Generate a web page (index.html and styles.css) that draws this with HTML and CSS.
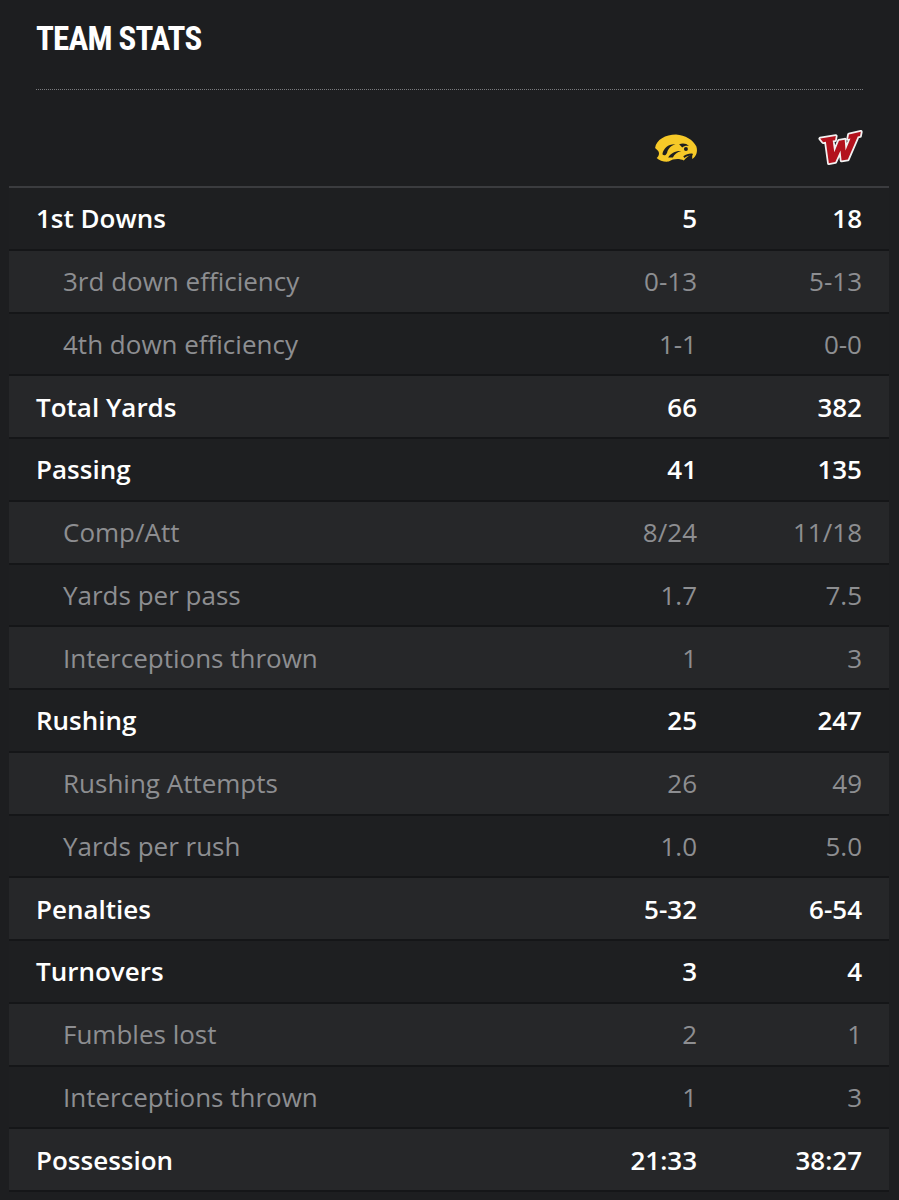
FILE: index.html
```html
<!DOCTYPE html>
<html lang="en">
<head>
<meta charset="utf-8">
<title>Team Stats</title>
<link rel="stylesheet" href="styles.css">
</head>
<body>
<div class="page">
  <header class="title-wrap">
    <h1 class="title">TEAM STATS</h1>
    <div class="dots"></div>
  </header>
  <div class="table">
    <div class="logos">
      <span></span>
      <span class="logo">
        <svg width="46" height="31" viewBox="0 0 44 29" aria-label="Iowa">
          <path fill="#f6c928" d="M2,14 C3,6 12,1 22,1 C31,1.5 38,6 41.5,12.5 C43,17.5 41.5,22 37.5,24.5 L37.5,20 C35,21 32,23 29.5,26 C25.5,24 19.5,24 15,27 C10.5,27.5 6,26 3.5,23.5 C6,22 6.5,18.5 4.5,16.5 Z"/>
          <path fill="#1d1e20" d="M9,20 C10,14 15,10 21.5,10.5 C17.5,11.5 14.5,14.5 13.5,18.5 C12.5,21 10.5,22 9,20 Z"/>
          <path fill="#1d1e20" d="M14.5,23 C17,19 22,16.5 27,17 C23,18 20.5,20.5 19,23 Z"/>
          <path fill="#1d1e20" d="M25,10.5 C28,9 32,9.5 34.5,12 C32,11.5 29.5,12 28,13.5 Z"/>
          <circle cx="31.5" cy="15" r="1.9" fill="#1d1e20"/>
          <path fill="#1d1e20" d="M29,22 C32,20 35,19 38,19.5 L38,21 C35,21 32,22 30,23.5 Z"/>
        </svg>
      </span>
      <span class="logo">
        <svg width="48" height="42" viewBox="0 0 46 40" aria-label="Wisconsin">
          <path fill="#b3121d" stroke="#f2f2f2" stroke-width="3.4" stroke-linejoin="round" paint-order="stroke" d="M4,11 L19,8.5 L18.3,12.5 L16,12.8 L17.5,24 L22,13 L27.5,12 L28.3,22.5 L33,11 L30.8,11.3 L31.6,7 L43,4.5 L42.2,8.6 L40,9 L30.5,31 L24.5,32 L23.5,22.5 L18.5,33.5 L12.3,34.5 L9.5,14 L6.8,14.4 Z"/>
        </svg>
      </span>
    </div>
    <div class="row main"><span class="label">1st Downs</span><span class="num">5</span><span class="num">18</span></div>
    <div class="row sub"><span class="label">3rd down efficiency</span><span class="num">0-13</span><span class="num">5-13</span></div>
    <div class="row sub"><span class="label">4th down efficiency</span><span class="num">1-1</span><span class="num">0-0</span></div>
    <div class="row main"><span class="label">Total Yards</span><span class="num">66</span><span class="num">382</span></div>
    <div class="row main"><span class="label">Passing</span><span class="num">41</span><span class="num">135</span></div>
    <div class="row sub"><span class="label">Comp/Att</span><span class="num">8/24</span><span class="num">11/18</span></div>
    <div class="row sub"><span class="label">Yards per pass</span><span class="num">1.7</span><span class="num">7.5</span></div>
    <div class="row sub"><span class="label">Interceptions thrown</span><span class="num">1</span><span class="num">3</span></div>
    <div class="row main"><span class="label">Rushing</span><span class="num">25</span><span class="num">247</span></div>
    <div class="row sub"><span class="label">Rushing Attempts</span><span class="num">26</span><span class="num">49</span></div>
    <div class="row sub"><span class="label">Yards per rush</span><span class="num">1.0</span><span class="num">5.0</span></div>
    <div class="row main"><span class="label">Penalties</span><span class="num">5-32</span><span class="num">6-54</span></div>
    <div class="row main"><span class="label">Turnovers</span><span class="num">3</span><span class="num">4</span></div>
    <div class="row sub"><span class="label">Fumbles lost</span><span class="num">2</span><span class="num">1</span></div>
    <div class="row sub"><span class="label">Interceptions thrown</span><span class="num">1</span><span class="num">3</span></div>
    <div class="row main"><span class="label">Possession</span><span class="num">21:33</span><span class="num">38:27</span></div>
  </div>
</div>
</body>
</html>
```
FILE: styles.css
```css
html, body {
  margin: 0;
  padding: 0;
  background: #1d1e20;
}
body {
  font-family: "Open Sans", Lato, "Liberation Sans", sans-serif;
  color: #fff;
}
.page {
  width: 899px;
  height: 1200px;
  overflow: hidden;
}
.title-wrap {
  padding: 20px 36px 0 36px;
}
.title {
  margin: 0;
  font-family: "Liberation Sans Narrow", "Roboto Condensed", "Liberation Sans", sans-serif;
  font-stretch: condensed;
  font-weight: 700;
  font-size: 33px;
  line-height: 38px;
  color: #fff;
  letter-spacing: -0.8px;
}
.dots {
  margin-top: 31px;
  height: 0;
  border-top: 1px dotted #7a7b7e;
}
.table {
  margin: 0 10px 0 9px;
}
.logos {
  display: grid;
  grid-template-columns: 1fr 165px 165px;
  padding: 20px 25px 0 27px;
  height: 98px;
  align-items: center;
  border-bottom: 2px solid #3b3c3f;
  box-sizing: border-box;
}
.logo {
  display: flex;
  justify-content: flex-end;
}
.row {
  display: grid;
  grid-template-columns: 1fr 165px 165px;
  align-items: center;
  height: 62.75px;
  box-sizing: border-box;
  border-bottom: 2.5px solid #151618;
  padding: 0 27px;
  font-size: 26px;
  line-height: 32px;
}
.row:nth-child(odd) {
  background: #262729;
}
.row:nth-child(even) {
  background: #1e1f21;
}
.main {
  font-weight: 600;
  color: #fff;
}
.sub {
  font-weight: 400;
  color: #8d8e91;
}
.sub .label {
  padding-left: 27px;
}
.num {
  text-align: right;
}
```
